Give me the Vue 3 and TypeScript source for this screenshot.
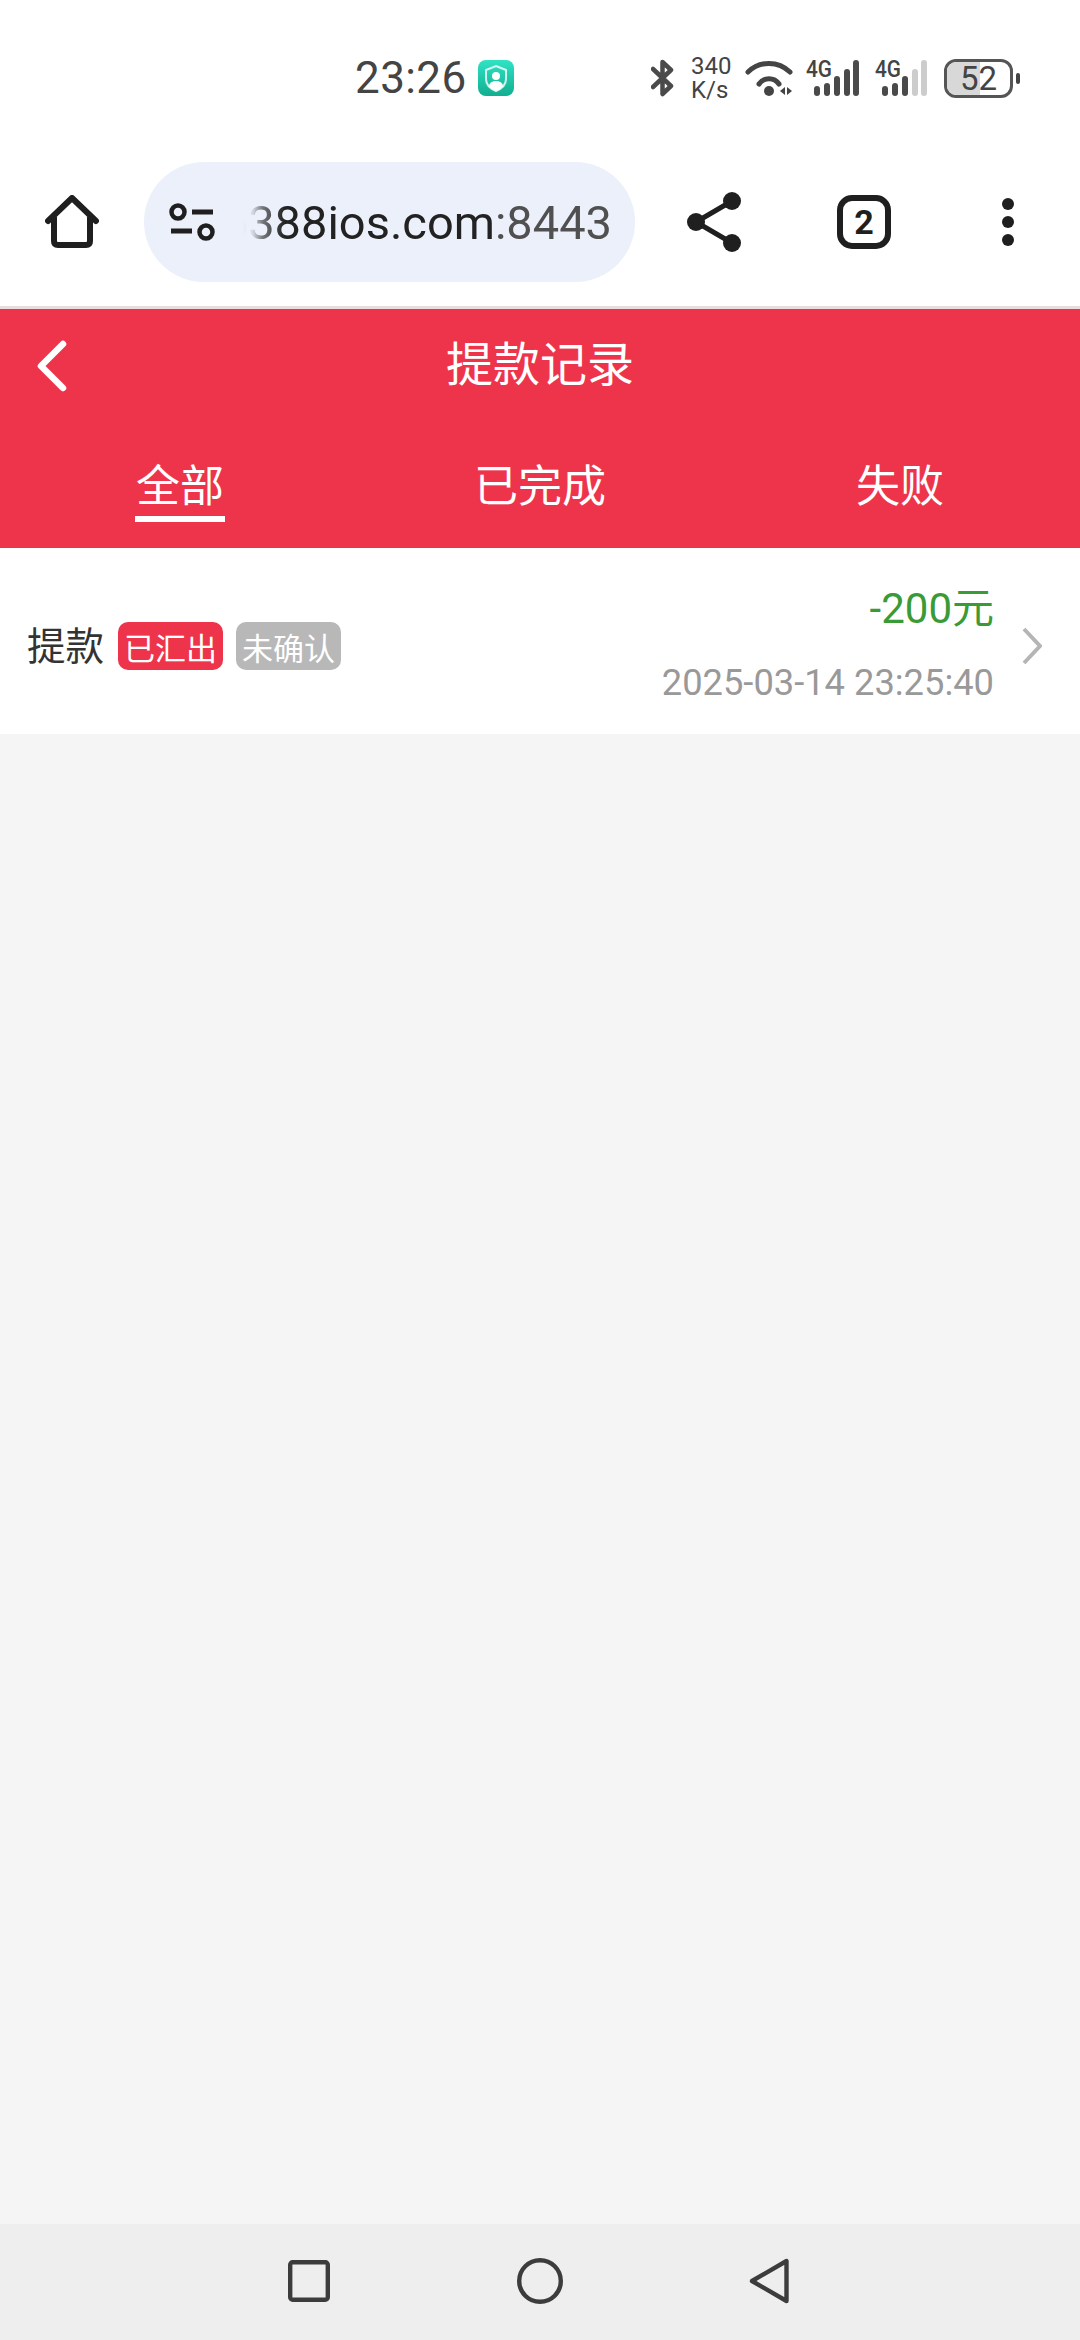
<script setup lang="ts">
import { ref } from 'vue'

interface Bar {
  x: number
  h: number
  on: boolean
}

const tabs = ['全部', '已完成', '失败']
const activeTab = ref(0)

const signalA: Bar[] = [
  { x: 11, h: 10, on: true },
  { x: 21, h: 13, on: true },
  { x: 31, h: 20, on: true },
  { x: 41, h: 27, on: true },
  { x: 50, h: 36, on: true },
]
const signalB: Bar[] = [
  { x: 10, h: 10, on: true },
  { x: 20, h: 13, on: true },
  { x: 30, h: 20, on: true },
  { x: 40, h: 27, on: false },
  { x: 49, h: 36, on: false },
]
const signals = [signalA, signalB]
</script>

<template>
  <div class="phone">
    <div class="status">
      <span class="time">23:26</span>
      <svg class="guard" width="36" height="36" viewBox="0 0 36 36">
        <defs>
          <linearGradient id="guardBg" x1="0" y1="0" x2="0" y2="1">
            <stop offset="0" stop-color="#2fe3c4" />
            <stop offset="1" stop-color="#12ae90" />
          </linearGradient>
          <clipPath id="shieldClip">
            <path d="M18 6 L28 10 V19 C28 25 23 29 18 31 C13 29 8 25 8 19 V10 Z" />
          </clipPath>
        </defs>
        <rect width="36" height="36" rx="8" fill="url(#guardBg)" />
        <path d="M18 6 L28 10 V19 C28 25 23 29 18 31 C13 29 8 25 8 19 V10 Z" fill="none" stroke="#fff" stroke-opacity=".8" stroke-width="2" />
        <circle cx="18" cy="16" r="4" fill="#fff" />
        <ellipse cx="18" cy="26" rx="7" ry="5" fill="#fff" clip-path="url(#shieldClip)" />
      </svg>

      <div class="status-right">
        <svg width="23" height="38" viewBox="0 0 23 38">
          <path d="M2 10 L20 27 L11.5 35 V3 L20 11 L2 28" fill="none" stroke="#4a4a4a" stroke-width="4.5" stroke-linejoin="round" stroke-linecap="round" />
        </svg>
        <div class="speed"><span>340</span><span>K/s</span></div>
        <svg class="wifi" width="50" height="40" viewBox="0 0 50 40">
          <path d="M3 14 A30 30 0 0 1 45 14" fill="none" stroke="#444" stroke-width="5" stroke-linecap="round" />
          <path d="M14 26 A12 12 0 0 1 34 26" fill="none" stroke="#444" stroke-width="5" stroke-linecap="round" />
          <circle cx="24" cy="33" r="5" fill="#444" />
          <path d="M35 33 L40 29 V37 Z M42 29 L47 33 L42 37 Z" fill="#444" />
        </svg>
        <svg v-for="(bars, i) in signals" :key="i" class="signal" width="58" height="46" viewBox="0 -6 58 46">
          <text x="0" y="19" class="net" textLength="26" lengthAdjust="spacingAndGlyphs">4G</text>
          <rect
            v-for="bar in bars"
            :key="bar.x"
            :x="bar.x - 3"
            :y="38 - bar.h"
            width="6"
            :height="bar.h"
            rx="3"
            :fill="bar.on ? '#4a4a4a' : '#ccc'"
          />
        </svg>
        <div class="battery">
          <div class="battery-level"></div>
          <span class="battery-num">52</span>
        </div>
        <div class="battery-tip"></div>
      </div>
    </div>

    <div class="toolbar">
      <svg width="54" height="54" viewBox="0 0 54 54">
        <path d="M3 26 L27 3 L51 26" fill="none" stroke="#1f1f1f" stroke-width="6" stroke-linecap="round" stroke-linejoin="round" />
        <path d="M9 22 V46 Q9 50 13 50 H41 Q45 50 45 46 V22" fill="none" stroke="#1f1f1f" stroke-width="6" />
      </svg>

      <div class="address">
        <svg width="46" height="40" viewBox="0 0 46 40">
          <circle cx="9" cy="10" r="6.5" fill="none" stroke="#1f1f1f" stroke-width="4.5" />
          <path d="M23 10 H44 M2 29 H23" stroke="#1f1f1f" stroke-width="5" />
          <circle cx="37" cy="30" r="6.5" fill="none" stroke="#1f1f1f" stroke-width="4.5" />
        </svg>
        <div class="url"><span>6388ios.com</span><span class="port">:8443</span></div>
      </div>

      <svg class="share" width="54" height="60" viewBox="0 0 54 60">
        <path d="M45 9 L9 30 L45 51" fill="none" stroke="#1f1f1f" stroke-width="5" />
        <circle cx="45" cy="9" r="9" fill="#1f1f1f" />
        <circle cx="9" cy="30" r="9" fill="#1f1f1f" />
        <circle cx="45" cy="51" r="9" fill="#1f1f1f" />
      </svg>

      <div class="tab-count">2</div>

      <svg class="dots" width="12" height="48" viewBox="0 0 12 48">
        <circle cx="6" cy="6" r="6" fill="#1f1f1f" />
        <circle cx="6" cy="24" r="6" fill="#1f1f1f" />
        <circle cx="6" cy="42" r="6" fill="#1f1f1f" />
      </svg>
    </div>

    <header class="head">
      <div class="title-row">
        <svg class="back" width="32" height="54" viewBox="0 0 32 54">
          <path d="M27 5 L5 27 L27 49" fill="none" stroke="#fff" stroke-width="6.5" stroke-linecap="round" stroke-linejoin="round" />
        </svg>
        <h1 class="title">提款记录</h1>
      </div>
      <div class="tabs">
        <div v-for="(tab, i) in tabs" :key="tab" class="tab" @click="activeTab = i">
          <span class="tab-label" :class="{ active: activeTab === i }">{{ tab }}</span>
        </div>
      </div>
    </header>

    <main class="list">
      <div class="row">
        <span class="row-name">提款</span>
        <span class="tag tag-red">已汇出</span>
        <span class="tag tag-gray">未确认</span>
        <div class="row-right">
          <div class="amount">-200元</div>
          <div class="date">2025-03-14 23:25:40</div>
        </div>
        <svg class="arrow" width="20" height="38" viewBox="0 0 20 38">
          <path d="M2 2 L18 19 L2 36" fill="none" stroke="#b5b5b5" stroke-width="4" />
        </svg>
      </div>
    </main>

    <nav class="nav">
      <svg width="42" height="42" viewBox="0 0 42 42">
        <rect x="2.2" y="2.2" width="37.6" height="37.6" rx="2.5" fill="none" stroke="#3c3c3c" stroke-width="4.4" />
      </svg>
      <svg class="nav-home" width="46" height="46" viewBox="0 0 46 46">
        <circle cx="23" cy="23" r="20.8" fill="none" stroke="#3c3c3c" stroke-width="4.4" />
      </svg>
      <svg class="nav-back" width="40" height="46" viewBox="0 0 40 46">
        <path d="M37.5 3 V43 L3 23 Z" fill="none" stroke="#3c3c3c" stroke-width="4.4" stroke-linejoin="round" />
      </svg>
    </nav>
  </div>
</template>

<style scoped>
.phone {
  width: 1080px;
  height: 2340px;
  display: flex;
  flex-direction: column;
  background: #fff;
  font-family: Roboto, "Noto Sans CJK SC", sans-serif;
}

.status {
  height: 104px;
  padding: 52px 60px 0 355px;
  box-sizing: border-box;
  display: flex;
  align-items: center;
  color: #444;
}

.time {
  width: 123px;
  font-size: 44px;
  letter-spacing: 0.4px;
}

.status-right {
  margin-left: auto;
  display: flex;
  align-items: center;
}

.speed {
  margin-left: 17px;
  width: 40px;
  display: flex;
  flex-direction: column;
  font-size: 24px;
  line-height: 24px;
  height: 40px;
  justify-content: center;
}

.wifi { margin-left: 14px; }

.signal {
  margin-left: 11px;
  margin-bottom: 6px;
}

.net {
  font-size: 24px;
  font-weight: 500;
  fill: #444;
}

.battery {
  position: relative;
  margin-left: 11px;
  width: 69px;
  height: 39px;
  box-sizing: border-box;
  border: 3.5px solid #555;
  border-radius: 12px;
  overflow: hidden;
  display: flex;
  align-items: center;
  justify-content: center;
}

.battery-level {
  position: absolute;
  left: 0;
  top: 0;
  bottom: 0;
  width: 52%;
  background: #d8d8d8;
}

.battery-num {
  position: relative;
  font-size: 33px;
  color: #444;
}

.battery-tip {
  margin-left: 3px;
  width: 4px;
  height: 11px;
  border-radius: 2px;
  background: #444;
}

.toolbar {
  height: 205px;
  padding: 58px 0 24px 45px;
  box-sizing: border-box;
  display: flex;
  align-items: center;
  border-bottom: 3px solid #e9dcdc;
}

.address {
  margin-left: 45px;
  width: 491px;
  height: 120px;
  padding: 0 23px 0 25px;
  box-sizing: border-box;
  border-radius: 60px;
  background: #ebf0fa;
  display: flex;
  align-items: center;
  flex-shrink: 0;
}

.url {
  margin-left: 18px;
  width: 379px;
  overflow: hidden;
  display: flex;
  justify-content: flex-end;
  white-space: nowrap;
  font-size: 47px;
  color: #222;
  -webkit-mask-image: linear-gradient(to right, transparent 10px, rgba(0, 0, 0, 0.12) 20px, rgba(0, 0, 0, 0.6) 30px, #000 52px);
  mask-image: linear-gradient(to right, transparent 10px, rgba(0, 0, 0, 0.12) 20px, rgba(0, 0, 0, 0.6) 30px, #000 52px);
}

.port { color: #505050; }

.share { margin-left: 52px; }

.tab-count {
  margin-left: 96px;
  width: 54px;
  height: 54px;
  box-sizing: border-box;
  border: 6px solid #1f1f1f;
  border-radius: 15px;
  display: flex;
  align-items: center;
  justify-content: center;
  font-size: 34px;
  font-weight: 700;
  color: #1f1f1f;
}

.dots { margin-left: 111px; }

.head {
  height: 239px;
  background: #ee344b;
  color: #fff;
}

.title-row {
  height: 108px;
  display: grid;
  grid-template-columns: 1fr auto 1fr;
  align-items: center;
  padding-left: 36px;
  padding-right: 36px;
}

.back { margin-top: 6px; }

.title {
  margin: 4px 0 0;
  font-size: 47px;
  font-weight: 400;
  line-height: 60px;
}

.tabs {
  height: 131px;
  display: flex;
  padding-top: 41px;
  box-sizing: border-box;
}

.tab {
  flex: 1;
  display: flex;
  justify-content: center;
  align-items: flex-start;
}

.tab-label {
  font-size: 44px;
  line-height: 58px;
  padding: 0 1px 6px;
}

.tab-label.active {
  padding-bottom: 0;
  border-bottom: 6px solid #fff;
}

.list {
  flex: 1;
  background: #f5f5f5;
}

.row {
  height: 186px;
  padding: 10px 38px 0 27px;
  box-sizing: border-box;
  display: flex;
  align-items: center;
  background: #fff;
}

.row-name {
  margin-bottom: 6px;
  font-size: 38.5px;
  color: #333;
}

.tag {
  width: 105px;
  height: 48px;
  border-radius: 10px;
  display: flex;
  align-items: center;
  justify-content: center;
  font-size: 31px;
  color: #fff;
}

.tag-red {
  margin-left: 14px;
  background: #ee344b;
}

.tag-gray {
  margin-left: 13px;
  background: #b8b8b8;
}

.row-right {
  margin-left: auto;
  text-align: right;
}

.amount {
  font-size: 42px;
  line-height: 44px;
  color: #3a9a35;
}

.date {
  margin-top: 30px;
  font-size: 36.3px;
  line-height: 44px;
  color: #999;
}

.arrow { margin-left: 28px; }

.nav {
  height: 116px;
  padding: 36px 0 0 288px;
  box-sizing: border-box;
  display: flex;
  align-items: flex-start;
  background: #eee;
}

.nav-home {
  margin-left: 187px;
  margin-top: -2px;
}

.nav-back {
  margin-left: 186px;
  margin-top: -2px;
}
</style>

<style>
html, body {
  margin: 0;
  background: #fff;
}
</style>
